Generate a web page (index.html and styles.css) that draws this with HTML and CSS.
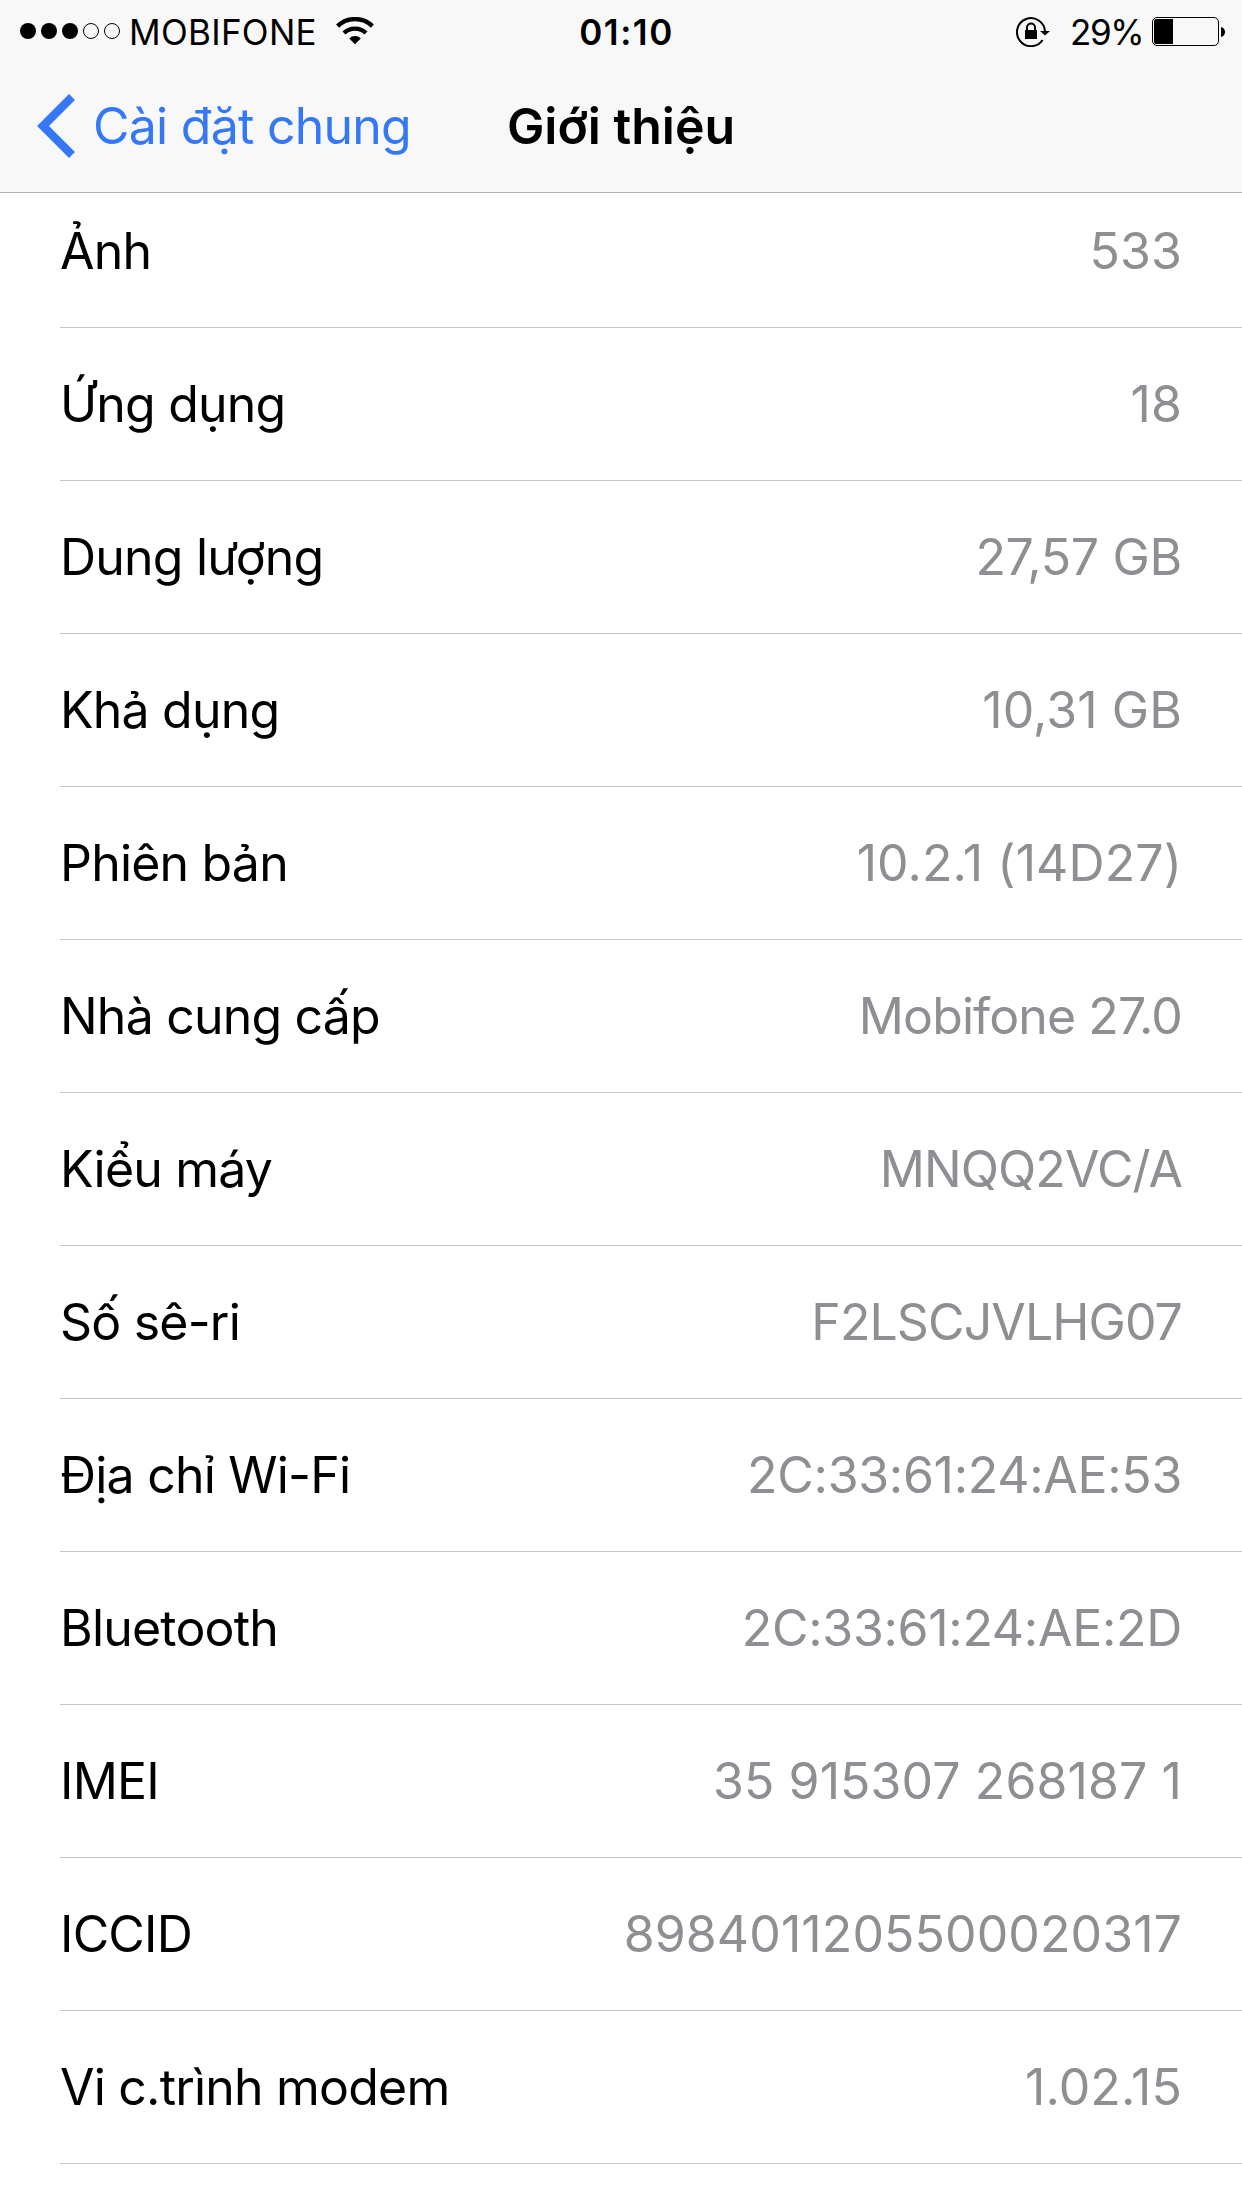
FILE: index.html
```html
<!DOCTYPE html>
<html lang="vi">
<head>
  <meta charset="utf-8">
  <title>Giới thiệu</title>
  <link rel="stylesheet" href="styles.css">
</head>
<body>
  <header class="header">
    <div class="status-bar">
      <div class="status-left">
        <svg class="signal" width="100" height="16" viewBox="0 0 100 16">
          <circle cx="8" cy="8" r="8"/>
          <circle cx="29" cy="8" r="8"/>
          <circle cx="50" cy="8" r="8"/>
          <circle cx="71" cy="8" r="7.5" fill="none" stroke="#000"/>
          <circle cx="92" cy="8" r="7.5" fill="none" stroke="#000"/>
        </svg>
        <span class="carrier">MOBIFONE</span>
        <svg class="wifi" width="38" height="28" viewBox="0 0 38 28">
          <g fill="none" stroke="#000" stroke-width="4.4">
            <path d="M1.6 9.1A25 25 0 0 1 36.4 9.1"/>
            <path d="M8 16A16 16 0 0 1 30 16"/>
          </g>
          <path d="M13.2 21.4A8.5 8.5 0 0 1 24.8 21.4L19 27.2Z"/>
        </svg>
      </div>
      <span class="time">01:10</span>
      <div class="status-right">
        <svg class="lock" width="35" height="31" viewBox="0 0 35 31">
          <path d="M26.6 24A14 14 0 1 1 29 15.5" fill="none" stroke="#000" stroke-width="2"/>
          <path d="M24 15H34L29 19.5Z"/>
          <rect x="9" y="14" width="12" height="9"/>
          <path d="M11 15V11.5A4 4 0 0 1 19 11.5V15" fill="none" stroke="#000" stroke-width="2"/>
        </svg>
        <span class="percent">29%</span>
        <svg class="battery" width="74" height="29" viewBox="0 0 74 29">
          <rect x="0.5" y="0.5" width="66" height="28" rx="4.5" fill="none" stroke="#000"/>
          <path d="M4 2H21V27H4A2 2 0 0 1 2 25V4A2 2 0 0 1 4 2Z"/>
          <path d="M69 10Q73 11 73 15T69 20Z"/>
        </svg>
      </div>
    </div>
    <div class="nav-bar">
      <div class="back">
        <svg class="chevron" width="38" height="64" viewBox="0 0 38 64">
          <path d="M35 3L6 32L35 61" fill="none" stroke="#3478f6" stroke-width="8.4"/>
        </svg>
        <span class="back-label">Cài đặt chung</span>
      </div>
      <h1 class="title">Giới thiệu</h1>
    </div>
  </header>

  <div class="list">
    <div class="row"><span class="label">Ảnh</span><span class="value">533</span></div>
    <div class="row"><span class="label">Ứng dụng</span><span class="value">18</span></div>
    <div class="row"><span class="label">Dung lượng</span><span class="value mixed">27,57 GB</span></div>
    <div class="row"><span class="label">Khả dụng</span><span class="value">10,31 GB</span></div>
    <div class="row"><span class="label">Phiên bản</span><span class="value">10.2.1 (14D27)</span></div>
    <div class="row"><span class="label">Nhà cung cấp</span><span class="value letters">Mobifone 27.0</span></div>
    <div class="row"><span class="label">Kiểu máy</span><span class="value letters">MNQQ2VC/A</span></div>
    <div class="row"><span class="label">Số sê-ri</span><span class="value letters">F2LSCJVLHG07</span></div>
    <div class="row"><span class="label">Địa chỉ Wi-Fi</span><span class="value mixed">2C:33:61:24:AE:53</span></div>
    <div class="row"><span class="label">Bluetooth</span><span class="value mixed">2C:33:61:24:AE:2D</span></div>
    <div class="row"><span class="label">IMEI</span><span class="value">35 915307 268187 1</span></div>
    <div class="row"><span class="label">ICCID</span><span class="value">8984011205500020317</span></div>
    <div class="row"><span class="label">Vi c.trình modem</span><span class="value">1.02.15</span></div>
  </div>
</body>
</html>
```
FILE: styles.css
```css
body {
  margin: 0;
  height: 2208px;
  overflow: hidden;
  background-color: #fff;
  color: #000;
  font-family: Inter, "Noto Sans", sans-serif;
}

.header {
  box-sizing: border-box;
  height: 193px;
  background-color: #f8f8f8;
  border-bottom: 1px solid #b2b2b2;
}

.status-bar {
  display: grid;
  grid-template-columns: 1fr auto 1fr;
  align-items: center;
  height: 60px;
  padding: 0 16px 0 20px;
  font-size: 35px;
  line-height: 60px;
}

.status-left,
.status-right {
  display: flex;
  align-items: center;
}

.status-right {
  justify-content: flex-end;
}

.carrier {
  margin-left: 9px;
  padding-top: 2px;
  letter-spacing: 0.3px;
}

.wifi {
  margin-left: 19px;
}

.time {
  padding: 2px 0 0 7px;
  font-weight: 600;
  letter-spacing: 1.5px;
}

.percent {
  margin: 2px 9px 0 19px;
  letter-spacing: -1.5px;
}

.nav-bar {
  display: grid;
  grid-template-columns: 1fr auto 1fr;
  align-items: center;
  height: 132px;
}

.back {
  display: flex;
  align-items: center;
  padding-left: 37px;
}

.back-label {
  margin-left: 18px;
  color: #3478f6;
  font-size: 50px;
  letter-spacing: -0.75px;
  white-space: nowrap;
}

.title {
  margin: 0;
  font-size: 50px;
  font-weight: 600;
}

.list {
  padding-left: 60px;
}

.row {
  display: flex;
  align-items: center;
  justify-content: space-between;
  box-sizing: border-box;
  height: 153px;
  padding-right: 60px;
  border-bottom: 1px solid #c6c6c8;
  font-size: 50px;
}

/* the first row is partly scrolled under the header */
.row:first-child {
  margin-top: -18px;
}

.label {
  letter-spacing: -0.8px;
}

.value {
  color: #8e8e93;
  letter-spacing: 0.1px;
}

.mixed {
  letter-spacing: -0.3px;
}

.letters {
  letter-spacing: -0.9px;
}
```
